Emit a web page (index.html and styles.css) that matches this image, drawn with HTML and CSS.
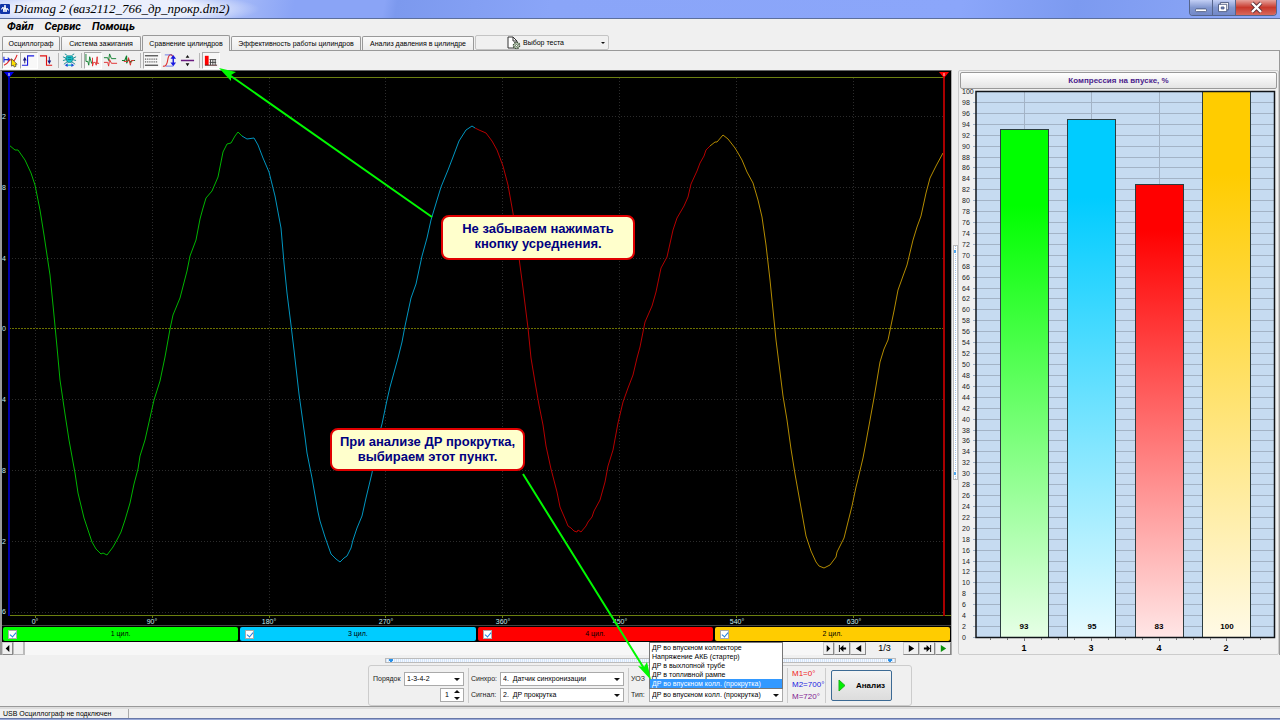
FILE: index.html
```html
<!DOCTYPE html>
<html lang="ru">
<head>
<meta charset="utf-8">
<title>Diamag 2</title>
<link rel="stylesheet" href="styles.css">
</head>
<body>
<header class="titlebar">
  <svg class="app-icon" viewBox="0 0 10 10"><rect width="10" height="10" rx="1" fill="#1034a8"/><path d="M1 5h1l1-2 1 5 1-7 1 7 1-4 1 2h1" fill="none" stroke="#fff"/></svg>
  <h1 class="title">Diamag 2 (ваз2112_766_др_прокр.dm2)</h1>
  <div class="window-buttons">
    <button class="win" aria-label="Свернуть"><svg viewBox="0 0 24 15"><rect x="6" y="9" width="12" height="3" rx="1" fill="#fff" stroke="#4d5a80"/></svg></button>
    <button class="win" aria-label="Развернуть"><svg viewBox="0 0 24 15"><path d="M8 2h9v8h-9z" fill="#fff" stroke="#4d5a80"/><path d="M6 4h9v8H6z" fill="#fff" stroke="#4d5a80"/><path d="M9 7h3v2H9z" fill="#6d8ad0" stroke="#4d5a80"/></svg></button>
    <button class="win close" aria-label="Закрыть"><svg viewBox="0 0 40 15"><path d="M16 3l9 9M25 3l-9 9" stroke="#5b3038" stroke-width="4"/><path d="M16 3l9 9M25 3l-9 9" stroke="#fff" stroke-width="2.4"/></svg></button>
  </div>
</header>
<nav class="menu"><button>Файл</button><button>Сервис</button><button>Помощь</button></nav>
<div class="tabs">
  <button class="tab t1">Осциллограф</button>
  <button class="tab t2">Система зажигания</button>
  <button class="tab t3 active">Сравнение цилиндров</button>
  <button class="tab t4">Эффективность работы цилиндров</button>
  <button class="tab t5">Анализ давления в цилиндре</button>
  <button class="test-menu">
    <svg class="doc" viewBox="0 0 14 14"><path d="M1 1h5l4 4v7H1z" fill="#fff" stroke="#333"/><path d="M6 1v4h4" fill="none" stroke="#333"/><circle cx="9.500" cy="9.500" r="3" fill="#cfe0c8" stroke="#3b4b38" stroke-width="1.600" stroke-dasharray="1.500 .8"/><circle cx="9.500" cy="9.500" r="1" fill="#fff" stroke="#3b4b38" stroke-width=".7"/></svg>
    <span>Выбор теста</span><i class="caret"></i>
  </button>
</div>
<div class="toolbar">
  <button class="tool pressed" aria-label="Маркеры"><svg viewBox="0 0 16 16"><path d="M1 4v6M1 7h6M5 5l2 2-2 2" fill="none" stroke="#1a2bd8" stroke-width="1.200"/><path d="M1 13q3-1 5-4t4-1 5-6" fill="none" stroke="#e02020" stroke-width="1.200"/><path d="M9 6v8l2-1 1 2 2-1-1-2h2z" fill="#ffe100" stroke="#333" stroke-width=".7"/></svg></button>
  <button class="tool pressed" aria-label="Передний фронт"><svg viewBox="0 0 16 16"><path d="M1 13h6V3h7" fill="none" stroke="#1a1ae0" stroke-width="1.200"/><path d="M4 6v5" stroke="#1a1a80"/><path d="M4 4L2 8h4z" fill="#1a1a80"/></svg></button>
  <button class="tool" aria-label="Задний фронт"><svg viewBox="0 0 16 16"><path d="M1 3h7v10h6" fill="none" stroke="#e01010" stroke-width="1.200"/><path d="M11 4v5" stroke="#1a1a80"/><path d="M9 8h4l-2 4z" fill="#1a1a80"/></svg></button>
  <i class="sep"></i>
  <button class="tool" aria-label="Синхронизация"><svg viewBox="0 0 16 16"><path d="M5 3h6l1 3-2 4H6L4 6z" fill="#18c8d0" stroke="#107880" stroke-width=".7"/><path d="M1 4l4 2M15 4l-4 2M1 8l4-1M15 8l-4-1M2 12l4-3M14 12l-4-3M5 2L3 1M11 2l2-1" stroke="#128a92"/><path d="M6 5h4M6 7h4" stroke="#0a5c60" stroke-width=".7"/><path d="M5 13h6" stroke="#20c0d0" stroke-width="1.500"/><path d="M3 13l3-2v4zM13 13l-3-2v4z" fill="#1a48d8"/></svg></button>
  <i class="sep"></i>
  <button class="tool pressed" aria-label="Кадры рядом"><svg viewBox="0 0 16 16"><path d="M1 1v8h2l1 4 1-9 2 7 1-2" fill="none" stroke="#128030"/><path d="M8 5v9l1-4h2l1 3 1-9v7h2" fill="none" stroke="#e03030"/></svg></button>
  <button class="tool" aria-label="Кадры друг под другом"><svg viewBox="0 0 16 16"><path d="M1 5h4l1 3 1-7 2 5h5" fill="none" stroke="#128030"/><path d="M1 10h4l1 4 1-7 2 4h6" fill="none" stroke="#e03030"/></svg></button>
  <button class="tool" aria-label="Наложение"><svg viewBox="0 0 16 16"><path d="M1 8h3l2-5v8l2-4 2 3 2-2h3" fill="none" stroke="#128030" stroke-width="1.200"/><path d="M3 9h4l1-4 2 8 1-5h3" fill="none" stroke="#e03030"/></svg></button>
  <i class="sep"></i>
  <button class="tool pressed" aria-label="Сетка"><svg viewBox="0 0 16 16"><path d="M1 3h14M1 13h14" stroke="#111"/><path d="M1 6.500h14M1 9.500h14" stroke="#111" stroke-dasharray="1 1"/></svg></button>
  <button class="tool" aria-label="Масштаб"><svg viewBox="0 0 16 16"><path d="M1 14q4 1 5-6t4-6l2 2" fill="none" stroke="#e03030" stroke-width="1.200"/><path d="M3 2h8M4 14h8" stroke="#3344e0" stroke-width=".7"/><path d="M12 4v8" stroke="#1a1ae0" stroke-width="1.500"/><path d="M9 6l3-4 3 4zM9 10l3 4 3-4z" fill="#1a1ae0"/></svg></button>
  <button class="tool" aria-label="Разделить"><svg viewBox="0 0 16 16"><path d="M1 8h14" stroke="#6a1a80" stroke-width="1.600"/><path d="M8 2L6 5h4zM8 14l-2-3h4z" fill="#111"/></svg></button>
  <i class="sep"></i>
  <button class="tool pressed" aria-label="Усреднение"><svg viewBox="0 0 16 16"><path d="M2 3h4v10H2z" fill="#f00"/><path d="M2 13h13" stroke="#502020"/><path d="M8 7v6M10.500 7v6M13 7v6M7 7h7M7 10h7" stroke="#444"/></svg></button>
</div>

<main class="main">
  <section class="scope">
    <svg class="plot" viewBox="2 71 949 554" role="img" aria-label="Осциллограмма">
      <g class="grid">
        <path d="M35.500 78V616M152.500 78V616M269.500 78V616M385.500 78V616M502.500 78V616M619.500 78V616M736.500 78V616M853.500 78V616M9 116.500H943M9 187.500H943M9 258.500H943M9 399.500H943M9 470.500H943M9 541.500H943M9 612.500H943"/>
      </g>
      <path class="zero" d="M9 328.500H943"/>
      <path class="frame" d="M9 77.500H943M9 615.500H951M35.500 615v3M152.500 615v3M269.500 615v3M385.500 615v3M502.500 615v3M619.500 615v3M736.500 615v3M853.500 615v3"/>
      <polyline class="wave" stroke="#00b400" points="9,145 15,150 18,150 25,160 31,173 35,185 40,210 44,235 50,275 53,305 57,347 60,380 65,414 69,440 75,473 78,493 84,518 92,542 96,549 101,554 103,553 107,555 113,547 118,538 121,532 125,520 130,503 134,484 138,469 140,456 145,440 154,400 160,381 165,357 170,329 173,315 180,298 187,271 190,256 196,240 200,219 203,208 206,198 212,191 218,177 223,152 227,144 231,143 235,136 238,132 242,136"/>
      <polyline class="wave" stroke="#0096c0" points="242,136 247,139 254,138 258,145 263,158 269,172 275,196 281,228 284,263 287,293 291,325 294,350 299,394 305,437 307,453 312,478 318,512 320,521 325,537 331,554 336,559 340,562 344,558 347,556 351,548 353,540 357,528 362,516 366,498 372,473 377,442 382,424 387,400 390,387 398,358 402,342 405,326 411,298 416,284 422,256 427,238 431,220 437,200 441,187 448,170 453,157 459,141 466,130 472,126 475,128"/>
      <polyline class="wave" stroke="#b40000" points="475,128 479,130 486,133 492,141 497,150 503,166 508,185 513,213 519,258 523,288 528,328 531,358 535,382 539,405 543,425 546,446 551,469 557,492 560,507 566,521 568,526 571,528 574,531 577,532 578,530 581,532 586,526 588,522 592,517 594,511 600,500 605,482 608,466 613,450 618,423 623,402 628,388 633,375 637,358 640,347 645,322 652,306 656,292 661,268 667,257 673,230 677,218 684,206 688,197 691,184 697,171 700,163 704,156 706,150 710,146"/>
      <polyline class="wave" stroke="#b48c00" points="710,146 715,142 717,142 723,135 728,139 735,148 738,153 742,160 747,172 753,183 758,200 762,217 766,245 770,280 773,310 776,340 780,372 783,396 787,420 791,449 795,474 800,502 803,519 806,536 811,551 816,562 819,566 824,568 830,565 836,557 837,552 844,538 848,522 852,506 856,487 858,479 863,458 866,442 874,398 880,362 884,349 888,340 894,311 898,290 903,276 907,265 913,240 917,227 921,216 926,193 930,178 936,166 943,153"/>
      <path d="M9 74V616" stroke="#0000a8" stroke-width="2"/>
      <path d="M944 74V616" stroke="#a80000" stroke-width="2"/>
      <path d="M4 72h10l-5 6z" fill="#0000f0"/><path d="M939 72h10l-5 6z" fill="#f00"/>
      <path d="M9 73v3" stroke="#fff"/><path d="M944 73v3" stroke="#fcc"/>
      <g class="axis">
        <text x="2" y="119">2</text><text x="2" y="190">8</text><text x="2" y="261">4</text><text x="2" y="331">0</text><text x="2" y="402">4</text><text x="2" y="473">8</text><text x="2" y="544">2</text><text x="2" y="614">6</text>
      </g>
      <g class="axis degrees">
        <text x="35" y="624">0°</text><text x="152" y="624">90°</text><text x="269" y="624">180°</text><text x="386" y="624">270°</text><text x="503" y="624">360°</text><text x="620" y="624">450°</text><text x="737" y="624">540°</text><text x="854" y="624">630°</text>
      </g>
    </svg>
    <div class="cylinders">
      <label class="cyl green"><input type="checkbox" checked><span>1 цил.</span></label>
      <label class="cyl blue"><input type="checkbox" checked><span>3 цил.</span></label>
      <label class="cyl red"><input type="checkbox" checked><span>4 цил.</span></label>
      <label class="cyl yellow"><input type="checkbox" checked><span>2 цил.</span></label>
    </div>
    <div class="pager">
      <button class="step narrow" aria-label="Влево"><svg viewBox="0 0 10 10"><path d="M3 5l4-4v8z"/></svg></button>
      <div class="track"><i class="thumb"></i></div>
      <button class="step narrow" aria-label="Вправо"><svg viewBox="0 0 10 10"><path d="M7 5L3 1v8z"/></svg></button>
      <button class="step" aria-label="Первая"><svg viewBox="0 0 10 10"><path d="M1 1h1v8H1zM2 5l4-4v3h3v2H6v3z"/></svg></button>
      <button class="step" aria-label="Предыдущая"><svg viewBox="0 0 10 10"><path d="M2 5l6-4v8z"/></svg></button>
      <span class="page">1/3</span>
      <button class="step" aria-label="Следующая"><svg viewBox="0 0 10 10"><path d="M8 5L2 1v8z"/></svg></button>
      <button class="step" aria-label="Последняя"><svg viewBox="0 0 10 10"><path d="M9 1H8v8h1zM8 5L4 1v3H1v2h3v3z"/></svg></button>
      <button class="step go" aria-label="Воспроизвести"><svg viewBox="0 0 10 10"><path d="M8 5L2 1v8z"/></svg></button>
    </div>
  </section>
  <div class="splitter"><i class="grip"></i></div>
  <section class="compression">
    <h2 class="chart-title">Компрессия на впуске, %</h2>
    <svg class="bars" viewBox="960 89 317 564" role="img" aria-label="Компрессия на впуске">
      <defs>
        <linearGradient id="gg" x2="0" y2="1"><stop offset=".15" stop-color="#0f0"/><stop offset="1" stop-color="#e6ffe6"/></linearGradient>
        <linearGradient id="gb" x2="0" y2="1"><stop offset=".15" stop-color="#00ccff"/><stop offset="1" stop-color="#e6faff"/></linearGradient>
        <linearGradient id="gr" x2="0" y2="1"><stop offset=".1" stop-color="#f00"/><stop offset="1" stop-color="#ffe6e6"/></linearGradient>
        <linearGradient id="gy" x2="0" y2="1"><stop offset=".15" stop-color="#ffcc00"/><stop offset="1" stop-color="#fffae6"/></linearGradient>
      </defs>
      <rect x="976" y="91" width="299" height="546" fill="#c6dbf1"/>
      <g id="rules" stroke="#a3b3c6"></g>
      <path d="M1024.500 91V637M1091.500 91V637M1159.500 91V637M1226.500 91V637" stroke="#a3b3c6"/>
      <g stroke="#2c3c40">
        <rect x="1000.500" y="129.500" width="48" height="508" fill="url(#gg)"/>
        <rect x="1067.500" y="119.500" width="48" height="518" fill="url(#gb)"/>
        <rect x="1135.500" y="184.500" width="48" height="453" fill="url(#gr)"/>
        <rect x="1202.500" y="91.500" width="48" height="546" fill="url(#gy)"/>
      </g>
      <rect x="976" y="91.500" width="298.500" height="546" fill="none" stroke="#101418" stroke-width="1.500"/>
      <path d="M990.500 638v2M1007.500 638v2M1024.500 638v3M1041.500 638v2M1058.500 638v2M1074.500 638v2M1091.500 638v3M1108.500 638v2M1125.500 638v2M1142.500 638v2M1159.500 638v3M1176.500 638v2M1193.500 638v2M1210.500 638v2M1226.500 638v3M1243.500 638v2M1260.500 638v2" stroke="#777"/>
      <g class="scale" id="scale"></g>
      <g class="values">
        <text x="1024" y="629">93</text><text x="1092" y="629">95</text><text x="1159" y="629">83</text><text x="1227" y="629">100</text>
      </g>
      <g class="names">
        <text x="1024" y="651">1</text><text x="1091" y="651">3</text><text x="1159" y="651">4</text><text x="1226" y="651">2</text>
      </g>
    </svg>
  </section>
</main>

<section class="bottom">
  <div class="handle"></div>
  <form class="controls">
    <div class="group order">
      <label for="order">Порядок</label>
      <div class="pick"><select id="order"><option>1-3-4-2</option></select></div>
      <div class="spin"><input id="number" aria-label="Номер" value="1"><i class="arrows"></i></div>
    </div>
    <div class="group source">
      <label for="sync">Синхро:</label>
      <div class="pick"><select id="sync"><option>4.&nbsp; Датчик синхронизации</option></select></div>
      <label for="signal">Сигнал:</label>
      <div class="pick"><select id="signal"><option>2.&nbsp; ДР прокрутка</option></select></div>
    </div>
    <div class="group kind">
      <label for="uoz">УОЗ</label>
      <div><input id="uoz" class="uoz"></div>
      <label for="type">Тип:</label>
      <div class="pick open">
        <select id="type"><option>ДР во впускном колл. (прокрутка)</option></select>
        <ul class="options" role="listbox">
          <li role="option">ДР во впускном коллекторе</li>
          <li role="option">Напряжение АКБ (стартер)</li>
          <li role="option">ДР в выхлопной трубе</li>
          <li role="option">ДР в топливной рампе</li>
          <li role="option" class="chosen" aria-selected="true">ДР во впускном колл. (прокрутка)</li>
        </ul>
      </div>
    </div>
    <div class="group marks"><span class="m1">M1=0°</span><span class="m2">M2=700°</span><span class="m">M=720°</span></div>
    <div class="group last"><button type="button" class="analyse"><svg viewBox="0 0 8 13"><path d="M1 1v11l6-5.500z" fill="#00f000" stroke="#18b018"/></svg>Анализ</button></div>
  </form>
</section>
<footer class="status"><span class="cell">USB Осциллограф не подключен</span><span class="cell wide"></span></footer>
<div class="edge"></div>

<div class="note first">Не забываем нажимать кнопку усреднения.</div>
<div class="note second">При анализе ДР прокрутка, выбираем этот пункт.</div>
<svg class="pointers" viewBox="0 0 1280 720" aria-hidden="true">
  <path d="M432 217L228 74M523 474L645 670" fill="none" stroke="#00f800" stroke-width="2"/>
  <path d="M219 68l17 4-5 3 0 6zM651 680l-13-14 6 1 3-5z" fill="#00f800"/>
</svg>
<script src="scale.js"></script>
</body>
</html>
```
FILE: styles.css
```css
* { box-sizing: border-box; }
body {
  margin: 0;
  height: 100vh;
  display: flex;
  flex-direction: column;
  position: relative;
  overflow: hidden;
  background: #f0f0f0;
  color: #000;
  font: 7px/10px "Liberation Sans", Arial, sans-serif;
}
button, input, select { font: inherit; color: inherit; padding: 0; margin: 0; }
button { border: 0; background: none; }
svg { display: block; }
h1, h2, ul { margin: 0; padding: 0; }

.titlebar {
  flex: 0 0 19px;
  display: flex;
  align-items: center;
  gap: 4px;
  border-bottom: 1px solid #5c6f9c;
  background:
    radial-gradient(ellipse 150px 18px at 110px 9px, rgba(255, 255, 255, .75) 60%, transparent),
    linear-gradient(100deg, #b9c9fa 0, #a8bcf8 18%, #8aa4f6 23%, #8aa4f6 30%, #7c99ee 31%, #8aa5f8 43%, #8ba6fa 75%, #7c9af0 84%, #8fa9f8 100%);
}
.app-icon { width: 10px; height: 10px; }
.title { flex: 1; font: italic 13px/18px "Liberation Serif", serif; white-space: nowrap; }
.window-buttons { display: flex; align-self: flex-start; margin-right: 3px; border: 1px solid #56658c; border-top: 0; border-radius: 0 0 4px 4px; overflow: hidden; }
.win { width: 23px; height: 15px; background: linear-gradient(#c3cff5, #8398d0 50%, #7288c8); border-right: 1px solid #56658c; }
.win svg { width: 100%; height: 15px; }
.win.close { width: 40px; border: 0; background: linear-gradient(#e6a29c, #c8392c 50%, #d8695c); }

.menu { flex: 0 0 16px; display: flex; gap: 11px; padding-left: 7px; }
.menu button { font: italic bold 11px/16px Roboto, sans-serif; }

.tabs { flex: 0 0 16px; display: flex; align-items: flex-end; gap: 1px; padding-left: 2px; border-bottom: 1px solid #999; }
.tab { height: 14px; border: 1px solid #999; border-bottom: 0; border-radius: 2px 2px 0 0; background: linear-gradient(#fafafa, #ececec); white-space: nowrap; }
.tab.active { height: 16px; margin-bottom: -1px; background: #f0f0f0; }
.t1 { width: 58px; }
.t2 { width: 80px; }
.t3 { width: 88px; }
.t4 { width: 130px; }
.t5 { width: 112px; }
.test-menu { width: 134px; height: 15px; display: flex; align-items: center; gap: 2px; padding: 0 3px 0 31px; border: 1px solid #c4c4c4; border-radius: 2px; }
.doc { width: 14px; height: 14px; }
.caret { margin-left: auto; border: 2px solid transparent; border-top-color: #111; border-bottom: 0; }

.toolbar { flex: 0 0 19px; display: flex; align-items: center; padding-left: 2px; border-right: 1px solid #999; }
.tool { width: 18px; height: 17px; border: 1px solid transparent; }
.tool.pressed { border-color: #aaa #fff #fff #aaa; background: #f8f8f8; }
.tool svg { width: 15px; height: 15px; }
.sep { width: 1px; height: 15px; margin: 0 2px; background: #b8b8b8; }

.main { flex: 1; min-height: 0; display: flex; border-right: 1px solid #999; }
.scope { flex: 1; min-width: 0; display: flex; flex-direction: column; border-left: 2px solid #999; border-top: 1px solid #666; background: #000; }
.plot { flex: 1; min-height: 0; width: 100%; }
.grid { fill: none; stroke: #2c2c2c; stroke-dasharray: 1 2; }
.zero { fill: none; stroke: #6c7000; stroke-dasharray: 2 1; }
.frame { fill: none; stroke: #6c8010; }
.wave { fill: none; stroke-width: 1; }
.axis { fill: #c8eaea; font: 7px "Liberation Sans", sans-serif; }
.degrees { text-anchor: middle; }

.cylinders { display: grid; grid-template-columns: repeat(4, 1fr); gap: 2px; padding: 1px; border-top: 1px solid #444; }
.cyl { display: flex; align-items: center; height: 14px; padding: 0 14px 0 5px; border-radius: 2px; }
.cyl span { flex: 1; text-align: center; }
.cyl input { appearance: none; width: 9px; height: 9px; border: 1px solid #aaa; background: #fff; position: relative; }
.cyl input:checked::after { content: ""; position: absolute; left: 2px; top: 0; width: 3px; height: 5px; border: solid #2080e0; border-width: 0 1px 1px 0; transform: rotate(40deg); }
.green { background: #0f0; }
.blue { background: #00ccff; }
.red { background: #f00; }
.yellow { background: #ffcc00; }

.pager { display: flex; height: 13px; background: #f7f7f7; }
.track { flex: 1; }
.thumb { display: block; width: 12px; height: 13px; border: 1px solid #bbb; border-width: 0 2px 1px 1px; background: #f0f0f0; }
.step { width: 16px; height: 13px; border: 1px solid #ccc; border-right-color: #888; border-bottom-color: #888; background: #f0f0f0; }
.step.narrow { width: 11px; }
.step svg { width: 9px; height: 9px; margin: auto; }
.go { fill: #0a900a; }
.page { width: 37px; text-align: center; font-size: 9px; line-height: 13px; background: #f0f0f0; }

.splitter { flex: 0 0 7px; display: flex; align-items: center; justify-content: center; border-left: 1px solid #aaa; }
.grip { width: 5px; height: 235px; border: 1px solid #bbb; background: linear-gradient(#50a8f0, #50a8f0) 50% 4px / 2px 3px no-repeat, linear-gradient(#50a8f0, #50a8f0) 50% 226px / 2px 3px no-repeat, repeating-linear-gradient(#a8c8f0 0 1px, #fff 1px 2px) center / 1px 100% no-repeat, #fff; }

.compression { flex: 0 0 321px; display: flex; flex-direction: column; border: 1px solid #ccc; border-radius: 2px; padding: 1px; }
.chart-title { flex: 0 0 17px; border: 1px solid #999; border-radius: 2px; background: linear-gradient(#fff, #e4e4e4); color: #4b1c8c; font: bold 8px/15px "Liberation Sans", sans-serif; text-align: center; }
.bars { flex: 1; min-height: 0; width: 100%; overflow: visible; }
.scale { font: 7px "Liberation Sans", sans-serif; fill: #222; }
.values, .names { font-family: "Liberation Sans", sans-serif; font-weight: bold; text-anchor: middle; }
.values { font-size: 8px; }
.names { font-size: 9px; }

.bottom { flex: 0 0 52px; display: flex; flex-direction: column; align-items: center; border-bottom: 1px solid #999; }
.handle { width: 511px; height: 5px; margin: 3px 0 2px; border: 1px solid #bbb; background: radial-gradient(circle at 5px 1px, #2890e8 2px, transparent 2px), radial-gradient(circle at 504px 1px, #2890e8 2px, transparent 2px), repeating-linear-gradient(90deg, #d4e6fa 0 1px, #f4f8ff 1px 2px); }
.controls { display: flex; align-items: center; height: 41px; padding: 0 19px 0 4px; border: 1px solid #ccc; border-radius: 3px; }
.group { height: 35px; display: grid; grid-template-rows: 14px 14px; gap: 2px 0; align-content: center; align-items: center; padding: 2px 4px 0 0; }
.group + .group { border-left: 1px solid #ccc; padding-left: 2px; }
.group.last { display: flex; padding: 0 0 0 5px; }
.order { grid-template-columns: 31px 60px; }
.source { grid-template-columns: 29px 124px; }
.kind { grid-template-columns: 18px 134px; }
.group label { color: #222; white-space: nowrap; }
.pick { position: relative; }
.pick select { appearance: none; display: block; width: 100%; height: 14px; padding: 0 2px; border: 1px solid #aaa; border-radius: 0; background: #fff; }
.pick::after { content: ""; position: absolute; right: 4px; top: 6px; border: 3px solid transparent; border-top-color: #111; border-bottom: 0; }
.spin { grid-column: 2; justify-self: end; position: relative; width: 24px; }
.spin input { display: block; width: 24px; height: 14px; padding-left: 4px; border: 1px solid #aaa; background: #fff; }
.arrows::before, .arrows::after { content: ""; position: absolute; right: 4px; border: 3px solid transparent; }
.arrows::before { top: 2px; border-top: 0; border-bottom-color: #111; }
.arrows::after { bottom: 2px; border-bottom: 0; border-top-color: #111; }
.uoz { display: block; width: 40px; height: 14px; border: 1px solid #aaa; }
.options { position: absolute; left: 0; right: 0; bottom: calc(100% - 1px); list-style: none; border: 1px solid #777; background: #fff; white-space: nowrap; }
.options li { height: 9px; padding-left: 2px; line-height: 9px; }
.options .chosen { background: #3399ff; color: #fff; }
.group.marks { width: 38px; display: flex; flex-direction: column; justify-content: space-around; align-items: flex-start; gap: 0; padding: 0 0 0 4px; font-size: 8px; }
.m1 { color: #f02020; }
.m2 { color: #2020e0; }
.m { color: #802090; }
.analyse { display: flex; align-items: center; gap: 10px; width: 61px; height: 31px; padding-left: 6px; border: 1px solid #3c6a94; border-radius: 2px; background: linear-gradient(#f4f4f4, #dcdcdc); font: bold 8px/10px "Liberation Sans", sans-serif; }
.analyse svg { width: 8px; height: 13px; }

.status { flex: 0 0 11px; display: flex; border-top: 2px solid #ddd; }
.cell { width: 129px; padding-left: 3px; border-right: 1px solid #aaa; line-height: 9px; white-space: nowrap; }
.cell.wide { flex: 1; border: 0; }
.edge { flex: 0 0 2px; background: #98a8d8; border-top: 1px solid #6878a8; }

.note { position: absolute; border: 2px solid #e00000; border-radius: 8px; background: #ffffcc; color: #000080; font: bold 13px/15px "Liberation Sans", sans-serif; text-align: center; }
.first { left: 441px; top: 215px; width: 194px; padding: 4px 15px 7px; }
.second { left: 330px; top: 428px; width: 195px; padding: 4px 4px 5px; }
.pointers { position: absolute; inset: 0; width: 100%; height: 100%; pointer-events: none; }
```
FILE: scale.js
```js
const svgNamespace = "http://www.w3.org/2000/svg";
const scale = document.getElementById("scale");
const rules = document.getElementById("rules");
for (let value = 0; value <= 100; value += 2) {
  const y = Math.round(637 - value * 5.46);
  const text = document.createElementNS(svgNamespace, "text");
  text.setAttribute("x", 962);
  text.setAttribute("y", y + 3);
  text.textContent = value;
  scale.append(text);
  const rule = document.createElementNS(svgNamespace, "path");
  rule.setAttribute("d", `M${value < 100 ? 973 : 976} ${y + 0.5}H1275`);
  rules.append(rule);
}
```
